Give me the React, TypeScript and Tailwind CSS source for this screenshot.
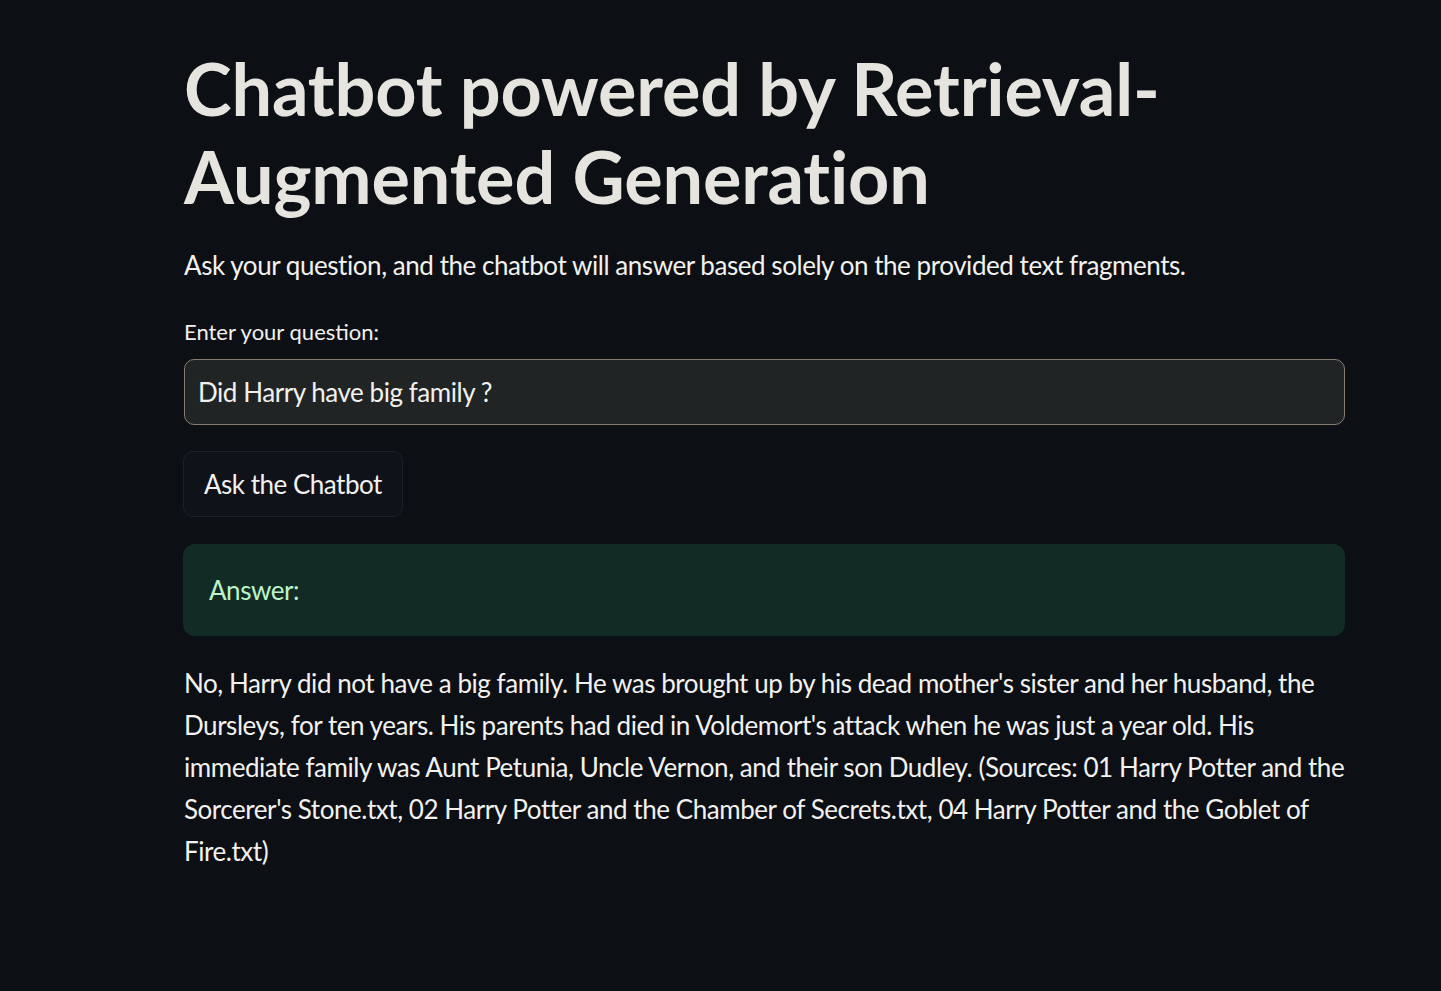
import React from 'react';

const font = { fontFamily: 'Lato, "Noto Sans", sans-serif' };

export default function App() {
  return (
    <div className="min-h-screen w-full bg-[#0c0f14] text-[#e6e4df]" style={font}>
      <div className="ml-[184px] w-[1161px] pt-[44px]">
        <h1 className="text-[72px] font-bold leading-[88px] tracking-[-0.15px] text-[#e6e4df]">
          Chatbot powered by Retrieval-
          <br />
          Augmented Generation
        </h1>

        <p className="mt-[24px] text-[26px] leading-[42px] tracking-[-0.45px] text-[#f2f1ee]">
          Ask your question, and the chatbot will answer based solely on the provided text fragments.
        </p>

        <label className="mt-[31px] block text-[22px] leading-[30px] text-[#f2f1ee]">Enter your question:</label>
        <div className="mt-[12px] flex h-[66px] items-center rounded-[10px] border border-[#857d70] bg-[#212425] px-[13px] text-[26px] tracking-[-0.45px] text-[#f2f1ee]">
          Did Harry have big family ?
        </div>

        <button className="-ml-px mt-[26px] flex h-[66px] items-center rounded-[10px] border border-[#1c2028] bg-[#0f1219] px-[20px] text-[26px] tracking-[-0.5px] text-[#f2f1ee]">
          Ask the Chatbot
        </button>

        <div className="-ml-px mt-[27px] flex h-[92px] items-center rounded-[12px] bg-[#122b24] px-[26px] text-[26px] tracking-[-0.45px] text-[#bdf3c8]">
          Answer:
        </div>

        <p className="mt-[26px] text-[26px] leading-[42px] tracking-[-0.45px] text-[#f2f1ee]">
          No, Harry did not have a big family. He was brought up by his dead mother's sister and her husband, the Dursleys,
          for ten years. His parents had died in Voldemort's attack when he was just a year old. His immediate family was
          Aunt Petunia, Uncle Vernon, and their son Dudley. (Sources: 01 Harry Potter and the Sorcerer's Stone.txt, 02
          Harry Potter and the Chamber of Secrets.txt, 04 Harry Potter and the Goblet of Fire.txt)
        </p>
      </div>
    </div>
  );
}
